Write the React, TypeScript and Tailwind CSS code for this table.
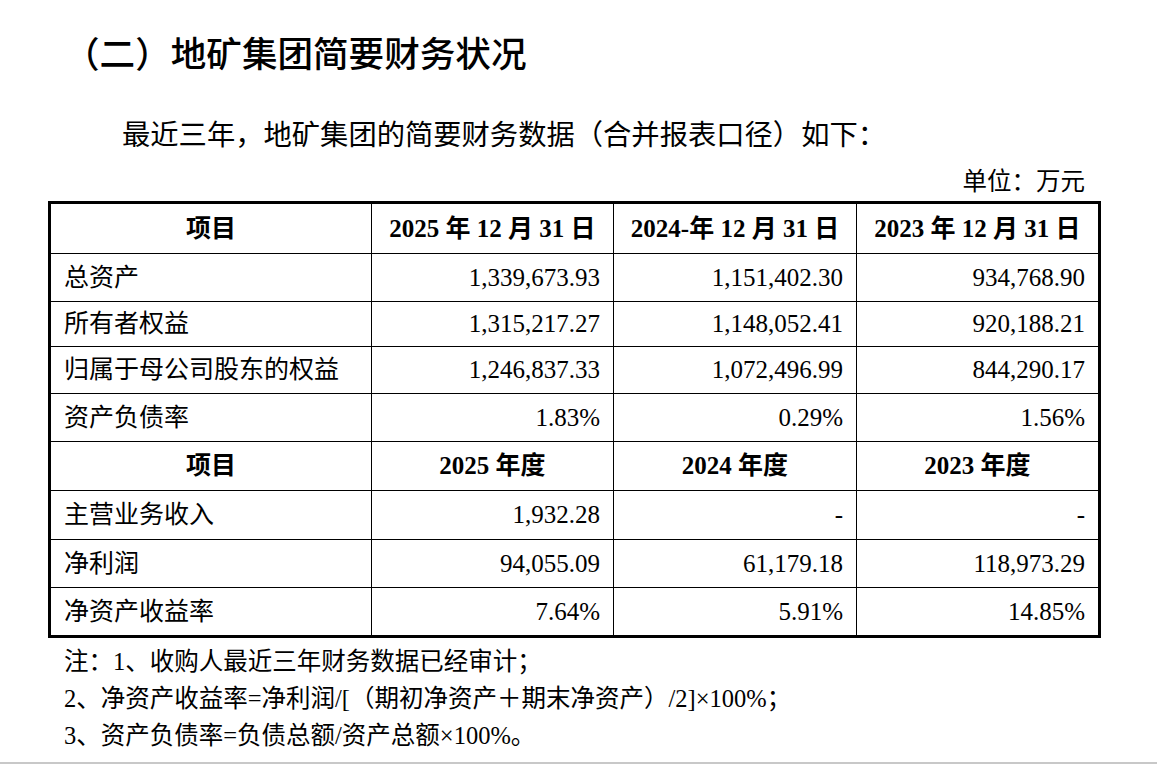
const rows1 = [
  { label: "总资产", v: ["1,339,673.93", "1,151,402.30", "934,768.90"], h: "h-[48px]" },
  { label: "所有者权益", v: ["1,315,217.27", "1,148,052.41", "920,188.21"], h: "h-[45px]" },
  { label: "归属于母公司股东的权益", v: ["1,246,837.33", "1,072,496.99", "844,290.17"], h: "h-[47px]" },
  { label: "资产负债率", v: ["1.83%", "0.29%", "1.56%"], h: "h-[48px]" },
];

const rows2 = [
  { label: "主营业务收入", v: ["1,932.28", "-", "-"], h: "h-[49px]" },
  { label: "净利润", v: ["94,055.09", "61,179.18", "118,973.29"], h: "h-[48px]" },
  { label: "净资产收益率", v: ["7.64%", "5.91%", "14.85%"], h: "h-[49px]" },
];

const serif = "font-['Liberation_Serif','Noto_Sans_CJK_SC',serif]";
const cell = "border border-black px-[13px] align-middle";

export default function App() {
  return (
    <div className={`relative h-[764px] w-full bg-white text-black ${serif} [text-spacing-trim:space-all] border-b-2 border-[#c8c8c8]`}>
      {/* Title */}
      <h1 className="pt-[30px] pl-[64px] text-[35.6px] leading-[44px] font-medium font-['Noto_Sans_CJK_SC',sans-serif]">
        （二）地矿集团简要财务状况
      </h1>

      <p className="mt-[44px] pl-[122px] text-[28.3px] leading-[36px]">
        最近三年，地矿集团的简要财务数据（合并报表口径）如下：
      </p>

      <div className="mt-[13px] pr-[72px] text-right text-[24.5px] leading-[30px]">单位：万元</div>

      <table className="mt-[4px] ml-[48px] w-[1050px] table-fixed border-collapse border-[3px] border-black text-[25px] leading-[30px]">
        <colgroup>
          <col className="w-[322px]" />
          <col className="w-[242px]" />
          <col className="w-[243px]" />
          <col className="w-[243px]" />
        </colgroup>
        <tbody>
          <tr className="h-[51px] font-bold">
            <td className={`${cell} text-center`}>项目</td>
            <td className={`${cell} text-center`}>2025 年 12 月 31 日</td>
            <td className={`${cell} text-center`}>2024-年 12 月 31 日</td>
            <td className={`${cell} text-center`}>2023 年 12 月 31 日</td>
          </tr>
          {rows1.map((r) => (
            <tr key={r.label} className={r.h}>
              <td className={cell}>{r.label}</td>
              {r.v.map((x, i) => (
                <td key={i} className={`${cell} text-right`}>{x}</td>
              ))}
            </tr>
          ))}
          <tr className="h-[49px] font-bold">
            <td className={`${cell} text-center`}>项目</td>
            <td className={`${cell} text-center`}>2025 年度</td>
            <td className={`${cell} text-center`}>2024 年度</td>
            <td className={`${cell} text-center`}>2023 年度</td>
          </tr>
          {rows2.map((r) => (
            <tr key={r.label} className={r.h}>
              <td className={cell}>{r.label}</td>
              {r.v.map((x, i) => (
                <td key={i} className={`${cell} text-right`}>{x}</td>
              ))}
            </tr>
          ))}
        </tbody>
      </table>

      {/* Notes */}
      <div className="mt-[5px] pl-[64px] text-[24.5px] leading-[37px]">
        <p>注：1、收购人最近三年财务数据已经审计；</p>
        <p>2、净资产收益率=净利润/[（期初净资产＋期末净资产）/2]×100%；</p>
        <p>3、资产负债率=负债总额/资产总额×100%。</p>
      </div>
    </div>
  );
}
